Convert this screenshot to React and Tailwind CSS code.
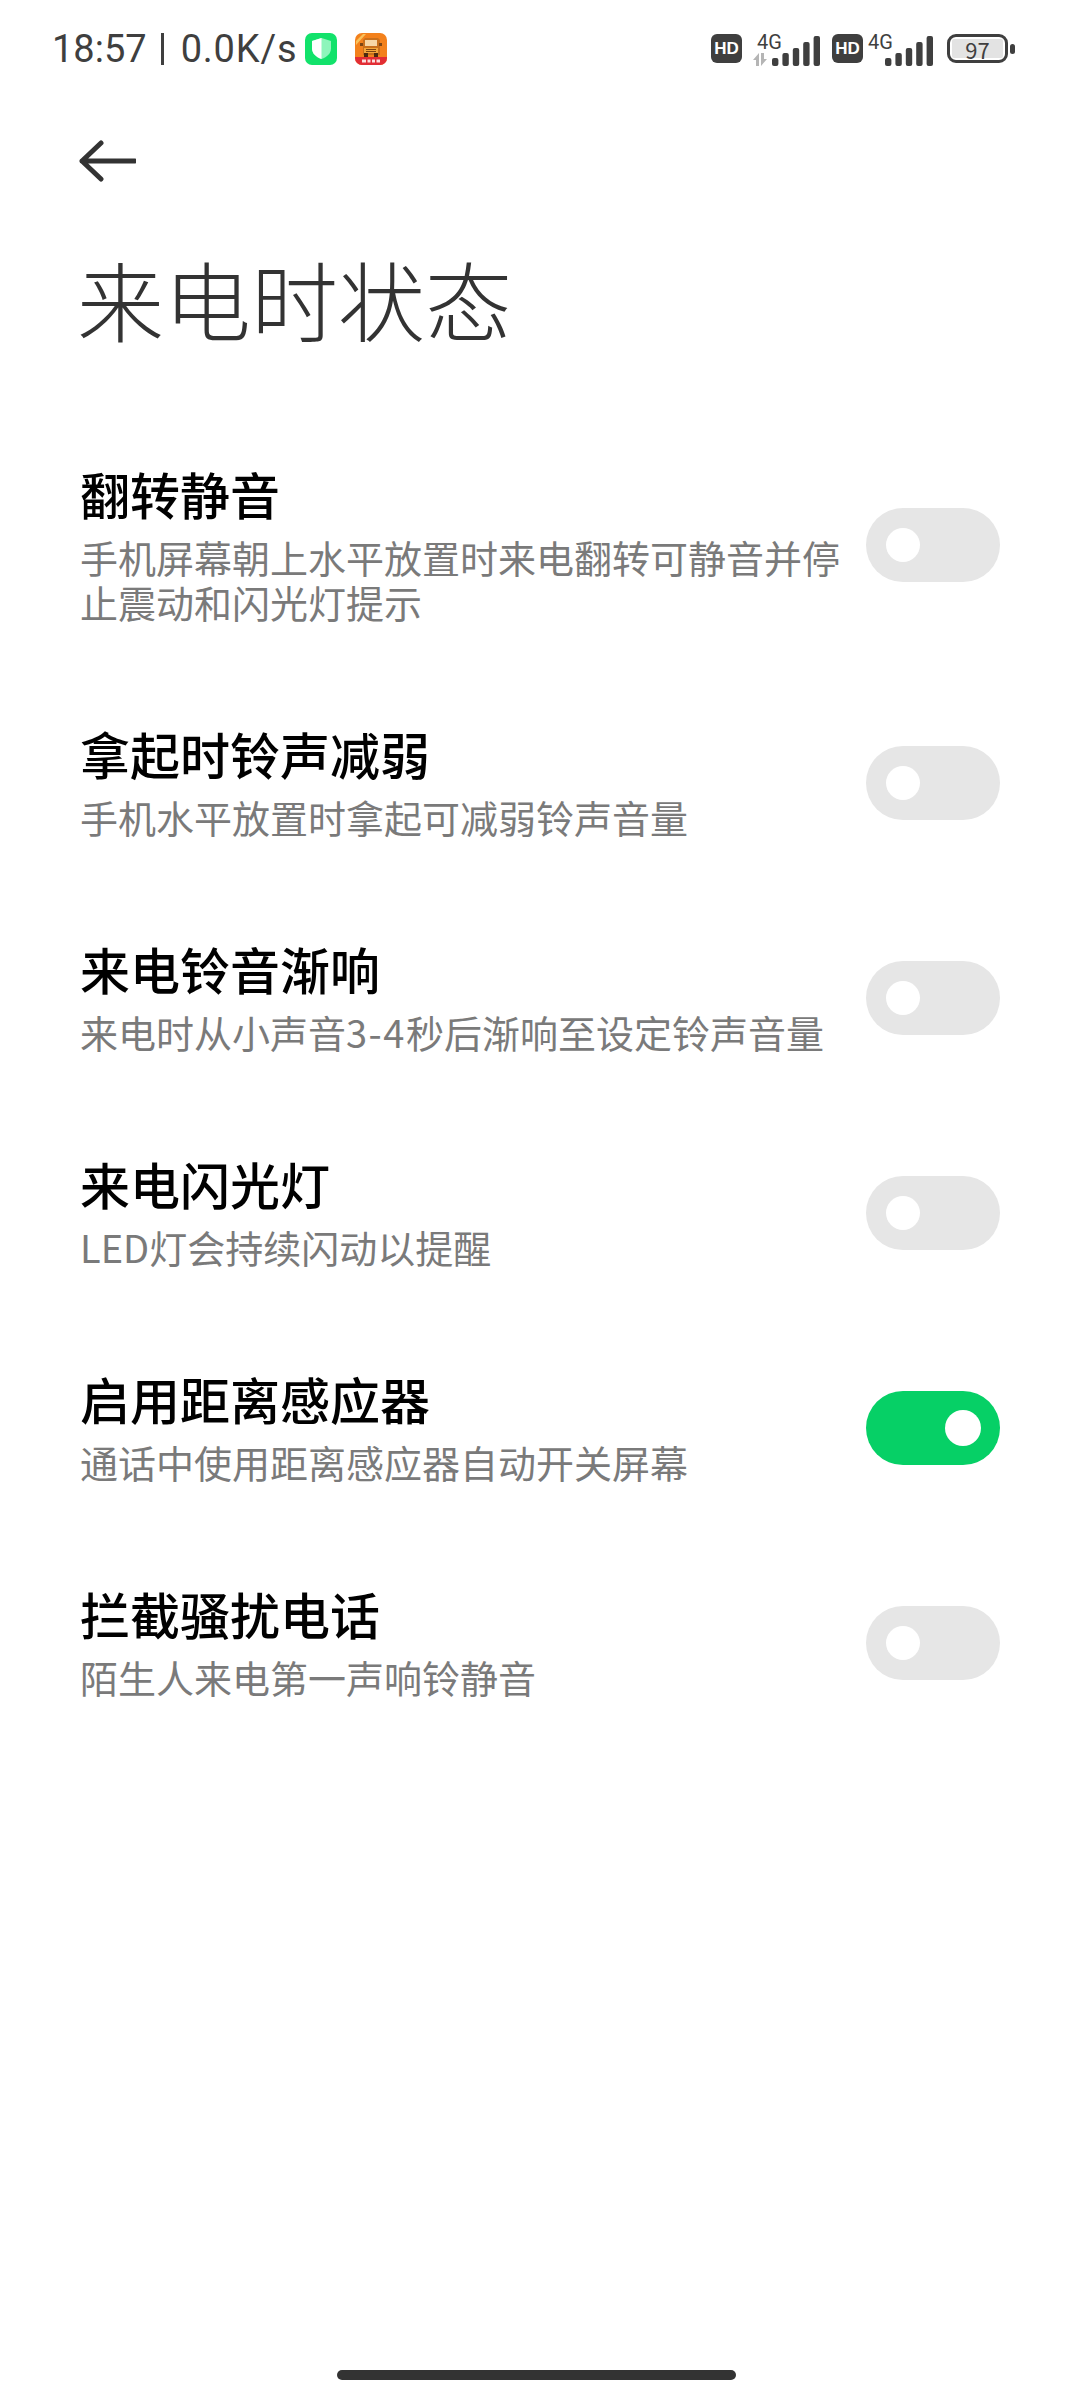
const rows = [
  { title: "翻转静音", desc: "手机屏幕朝上水平放置时来电翻转可静音并停止震动和闪光灯提示" },
  { title: "拿起时铃声减弱", desc: "手机水平放置时拿起可减弱铃声音量" },
  { title: "来电铃音渐响", desc: <>来电时从小声音<span className="tracking-[1.5px]">3-4</span>秒后渐响至设定铃声音量</> },
  { title: "来电闪光灯", desc: "LED灯会持续闪动以提醒" },
  { title: "启用距离感应器", desc: "通话中使用距离感应器自动开关屏幕", on: true },
  { title: "拦截骚扰电话", desc: "陌生人来电第一声响铃静音" },
];

function Toggle({ on }) {
  if (on) {
    return (
      <div className="mt-2 flex h-[74px] w-[134px] shrink-0 items-center justify-end rounded-full bg-[#06d066] pr-[19px]">
        <div className="h-9 w-9 rounded-full bg-white" />
      </div>
    );
  }
  return (
    <div className="mt-2 flex h-[74px] w-[134px] shrink-0 items-center rounded-full bg-[#e6e6e6] pl-5">
      <div className="h-[34px] w-[34px] rounded-full bg-white" />
    </div>
  );
}

function Row({ title, desc, on }) {
  return (
    <div className="flex items-center justify-between pl-[80px] pr-[80px] pt-[43px] pb-[51px]">
      <div className="w-[765px]">
        <div className="text-[50px] leading-[70px] font-medium text-black">{title}</div>
        <div className="mt-[6px] text-[38px] leading-[45px] text-[#7a7a7a]">{desc}</div>
      </div>
      <Toggle on={on} />
    </div>
  );
}

function Hd() {
  return (
    <svg width="31" height="29" viewBox="0 0 31 29">
      <rect width="31" height="29" rx="6" fill="#3f3f3f" />
      <text x="15.5" y="20" textAnchor="middle" fontSize="17" fontWeight="700" fill="#fff" fontFamily="Liberation Sans">HD</text>
    </svg>
  );
}

function Signal({ arrows }) {
  return (
    <svg width="68" height="34" viewBox="0 0 68 34" className="overflow-visible">
      <text x={arrows ? 5 : 3} y="17" fontSize="20" fill="#3f3f3f" fontFamily="Roboto">4G</text>
      {arrows && (
        <g fill="#b5b5b5">
          <path d="M1 28 7 21v13H4v-6z" />
          <path d="M9 21h3v6h3l-6 7z" />
        </g>
      )}
      {[0, 1, 2, 3, 4].map((i) => {
        const h = [8, 13, 18, 24, 30][i];
        return <rect key={i} x={20 + i * 10.4} y={34 - h} width="6.4" height={h} rx="2" fill="#3f3f3f" />;
      })}
    </svg>
  );
}

function Battery() {
  return (
    <div className="flex items-center gap-[2px]">
      <div className="flex h-[29px] w-[61px] items-center rounded-[9px] border-[3px] border-[#3f3f3f] p-[2px]">
        <div className="flex h-full w-full items-center justify-center rounded-[2px] bg-[#e3e3e3] text-[22px] leading-none text-[#3f3f3f]">97</div>
      </div>
      <div className="h-[10px] w-[5px] rounded-full bg-[#3f3f3f]" />
    </div>
  );
}

function Truck() {
  return (
    <svg width="32" height="32" viewBox="0 0 32 32">
      <rect width="32" height="32" rx="7" fill="#f3811c" />
      <path d="M0 24h32v1a7 7 0 0 1-7 7H7a7 7 0 0 1-7-7z" fill="#e22d35" />
      <path d="M8 22V7l2-2h13l2 2v15z" fill="#c9701d" />
      <path d="M10 7h12v6H10z" fill="#f7d6a6" />
      <path d="M9 15h14v5H9z" fill="#f4a63a" />
      <path d="M11 16h10v1H11zM11 18h10v1H11z" fill="#7d4514" />
      <rect x="5" y="10" width="3" height="3" fill="#7d4514" />
      <rect x="24" y="10" width="3" height="3" fill="#7d4514" />
      <rect x="9" y="20" width="4" height="4" fill="#4a2a10" />
      <rect x="19" y="20" width="4" height="4" fill="#4a2a10" />
      <path d="M1 8 8 1h3L1 12z" fill="#f9c25c" />
      <path d="M7 26.5h4v3H7zM12.5 26.5h3v3h-3zM17 26.5h3v3h-3zM21.5 26.5h3.5v3h-3.5z" fill="#fbdede" />
    </svg>
  );
}

export default function App() {
  return (
    <div className="flex h-[2400px] w-[1080px] flex-col bg-white font-['Noto_Sans_CJK_SC','Noto_Sans',sans-serif]">
      {/* Status bar */}
      <div className="flex h-[97px] items-center justify-between pl-[52px] pr-[65px]">
        <div className="flex items-center text-[38px] leading-none text-[#3f3f3f] font-['Roboto',sans-serif]">
          <span>18:57</span>
          <span className="ml-[14px] mr-[17px] h-8 w-[3px] bg-[#3f3f3f]" />
          <span className="tracking-[0.8px]">0.0K/s</span>
          <div className="ml-[8px] flex h-8 w-8 items-center justify-center rounded-[7px] bg-[#12e26b]">
            <svg width="19" height="21" viewBox="0 0 20 22">
              <path d="M10 0 20 3v8c0 5-4 9-10 11C4 20 0 16 0 11V3z" fill="#8ef5bb" />
              <path d="M10 0v22C4 20 0 16 0 11V3z" fill="#fff" />
            </svg>
          </div>
          <div className="ml-[18px]"><Truck /></div>
        </div>
        <div className="flex items-center">
          <Hd />
          <div className="ml-[10px]"><Signal arrows /></div>
          <div className="ml-[12px]"><Hd /></div>
          <div className="ml-[2px]"><Signal /></div>
          <div className="ml-[14px]"><Battery /></div>
        </div>
      </div>

      {/* Back */}
      <div className="mt-[43px] pl-[78px]">
        <svg width="58" height="42" viewBox="0 0 58 42" fill="none" stroke="#333" strokeWidth="5" strokeLinecap="round" strokeLinejoin="round">
          <path d="M4 21h53M23 3 4 21l19 18" />
        </svg>
      </div>

      {/* Title */}
      <h1 className="mt-[61px] pl-[77px] text-[87px] leading-[110px] font-light text-[#333]">来电时状态</h1>

      <div className="mt-[62px]">
        {rows.map((r) => (
          <Row key={r.title} {...r} />
        ))}
      </div>

      {/* Home indicator */}
      <div className="mt-auto mb-[20px] flex justify-center">
        <div className="h-[10px] w-[399px] -translate-x-[4px] rounded-full bg-[#333]" />
      </div>
    </div>
  );
}
